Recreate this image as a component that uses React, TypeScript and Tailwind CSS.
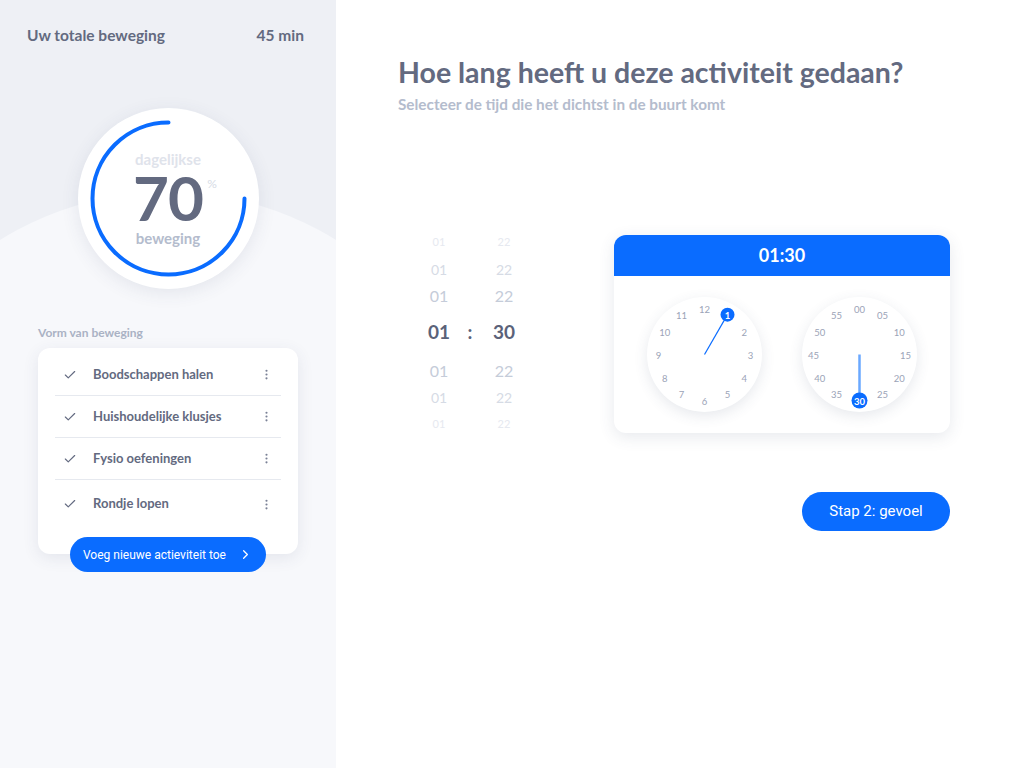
import { Check, ChevronRight, EllipsisVertical } from "lucide-react";

const activities = [
  "Boodschappen halen",
  "Huishoudelijke klusjes",
  "Fysio oefeningen",
  "Rondje lopen",
];

const pickerRows = [
  { h: "h-[27px]", size: "text-[11px]", color: "text-[#e6e9f0]", hour: "01", min: "22" },
  { h: "h-[27px]", size: "text-[14px]", color: "text-[#d6dbe5]", hour: "01", min: "22" },
  { h: "h-[25px]", size: "text-[16px]", color: "text-[#c5ccd9]", hour: "01", min: "22" },
  { h: "h-[49px]", size: "text-[19px]", color: "text-[#5b6279]", hour: "01", min: "30" },
  { h: "h-[27px]", size: "text-[16px]", color: "text-[#c5ccd9]", hour: "01", min: "22" },
  { h: "h-[27px]", size: "text-[14px]", color: "text-[#d6dbe5]", hour: "01", min: "22" },
  { h: "h-[27px]", size: "text-[11px]", color: "text-[#e6e9f0]", hour: "01", min: "22" },
];

function ClockFace({ labels, selected, hand }: { labels: string[]; selected: number; hand: "hour" | "minute" }) {
  const c = 57.5;
  const r = 46;
  const pos = (i: number, rad: number) => {
    const a = (i / 12) * Math.PI * 2;
    return { x: c + rad * Math.sin(a), y: c - rad * Math.cos(a) };
  };
  const sel = pos(selected, r);
  return (
    <div className="w-[115px] h-[115px] rounded-full bg-white shadow-[0_4px_14px_rgba(60,70,110,0.12)]">
      <svg width="115" height="115" viewBox="0 0 115 115">
        {hand === "hour" ? (
          <line x1={c} y1={c} x2={sel.x} y2={sel.y} stroke="#0a6cff" strokeWidth="1.2" />
        ) : (
          <line x1={c} y1={c} x2={sel.x} y2={sel.y} stroke="#6aa8ff" strokeWidth="2.5" />
        )}
        {labels.map((l, i) => {
          const p = pos(i, r);
          const active = i === selected;
          return (
            <g key={l}>
              {active && <circle cx={p.x} cy={p.y} r={hand === "hour" ? 7 : 8} fill="#0a6cff" />}
              <text
                x={p.x}
                y={p.y + 0.5}
                textAnchor="middle"
                dominantBaseline="central"
                fontSize="9.5"
                fontWeight={active ? 700 : 400}
                fill={active ? "#ffffff" : "#9ba3b7"}
                fontFamily="Lato, sans-serif"
              >
                {l}
              </text>
            </g>
          );
        })}
      </svg>
    </div>
  );
}

export default function App() {
  const hours = ["12", "1", "2", "3", "4", "5", "6", "7", "8", "9", "10", "11"];
  const minutes = ["00", "05", "10", "15", "20", "25", "30", "35", "40", "45", "50", "55"];

  return (
    <div className="flex w-full h-[768px] bg-white font-['Lato',sans-serif] overflow-hidden">
      {/* sidebar */}
      <div className="relative w-[336px] h-full bg-[#eef0f5] overflow-hidden shrink-0">
        <div className="absolute left-[-150px] top-[192px] w-[636px] h-[636px] rounded-full bg-[#f7f8fb]" />
        <div className="relative flex flex-col">
          <div className="flex justify-between items-center px-[27px] pt-[26px] h-[46px] text-[15.5px] font-bold text-[#636a80]">
            <span>Uw totale beweging</span>
            <span className="pr-[5px]">45 min</span>
          </div>

          <div className="flex justify-center mt-[62px]">
            <div className="relative w-[181px] h-[181px] rounded-full bg-white shadow-[0_4px_18px_rgba(60,70,110,0.10)]">
              <svg className="absolute inset-0" width="181" height="181" viewBox="0 0 181 181">
                <path
                  d="M 90.5 14.5 A 76 76 0 1 0 166.5 90.5"
                  fill="none"
                  stroke="#0a6cff"
                  strokeWidth="4"
                  strokeLinecap="round"
                />
              </svg>
              <div className="relative flex flex-col items-center pt-[42px]">
                <span className="text-[15px] leading-[18px] font-bold text-[#dfe3eb]">dagelijkse</span>
                <div className="relative my-[7px]">
                  <span className="block text-[62px] leading-[44px] font-bold text-[#636a80] tracking-[-1px]">70</span>
                  <span className="absolute right-[-14px] top-[2px] text-[12px] leading-[14px] text-[#d6dbe5]">%</span>
                </div>
                <span className="text-[15px] leading-[20px] mt-[2px] font-bold text-[#b4bccd]">beweging</span>
              </div>
            </div>
          </div>

          <div className="px-[38px] mt-[36px] text-[12px] font-bold text-[#aab2c4] leading-[16px]">Vorm van beweging</div>

          <div className="relative mx-[38px] mt-[7px] h-[206px] rounded-[12px] bg-white shadow-[0_4px_16px_rgba(60,70,110,0.10)]">
            <div className="flex flex-col px-[17px] pt-[6px]">
              {activities.map((a, i) => (
                <div
                  key={a}
                  className={`flex items-center ${i === 3 ? "h-[48px]" : "h-[42px] border-b border-[#e6e9ef]"}`}
                >
                  <Check size={14} strokeWidth={2} className="ml-[8px] text-[#636a80]" />
                  <span className="ml-[16px] flex-1 text-[13px] font-bold text-[#636a80]">{a}</span>
                  <EllipsisVertical size={13} className="mr-[8px] text-[#7a8196]" />
                </div>
              ))}
            </div>
            <div className="absolute left-[32px] bottom-[-18px] w-[196px] h-[35px] rounded-full bg-[#0a6cff] flex items-center pl-[13px] pr-[13px] font-['Roboto',sans-serif] text-white text-[12px] whitespace-nowrap">
              <span className="flex-1">Voeg nieuwe actieviteit toe</span>
              <ChevronRight size={15} strokeWidth={2} />
            </div>
          </div>
        </div>
      </div>

      {/* main */}
      <div className="flex-1 pl-[62px] pt-[54px]">
        <h1 className="text-[28.5px] leading-[36px] font-bold text-[#636a80]">Hoe lang heeft u deze activiteit gedaan?</h1>
        <p className="mt-[4px] text-[15.3px] leading-[20px] font-bold text-[#b4bccd]">Selecteer de tijd die het dichtst in de buurt komt</p>

        <div className="flex items-center mt-[115px] w-[552px]">
          <div className="flex flex-col ml-[16px]">
            {pickerRows.map((r, i) => (
              <div key={i} className={`flex items-center ${r.h} ${r.color} ${r.size} ${i === 3 ? "font-bold" : ""}`}>
                <span className="w-[50px] text-center">{r.hour}</span>
                <span className="w-[12px] text-center">{i === 3 ? ":" : ""}</span>
                <span className="w-[56px] text-center">{r.min}</span>
              </div>
            ))}
          </div>

          <div className="ml-[82px] w-[336px] h-[198px] rounded-[12px] bg-white shadow-[0_4px_16px_rgba(60,70,110,0.12)] overflow-hidden flex flex-col">
            <div className="h-[41px] bg-[#0a6cff] flex items-center justify-center text-white text-[18px] font-bold">01:30</div>
            <div className="flex-1 flex items-center justify-center gap-[40px]">
              <ClockFace labels={hours} selected={1} hand="hour" />
              <ClockFace labels={minutes} selected={6} hand="minute" />
            </div>
          </div>
        </div>

        <div className="flex w-[552px] justify-end mt-[54px]">
          <div className="w-[148px] h-[39px] rounded-full bg-[#0a6cff] flex items-center justify-center text-white text-[15px] font-['Roboto',sans-serif]">
            Stap 2: gevoel
          </div>
        </div>
      </div>
    </div>
  );
}
